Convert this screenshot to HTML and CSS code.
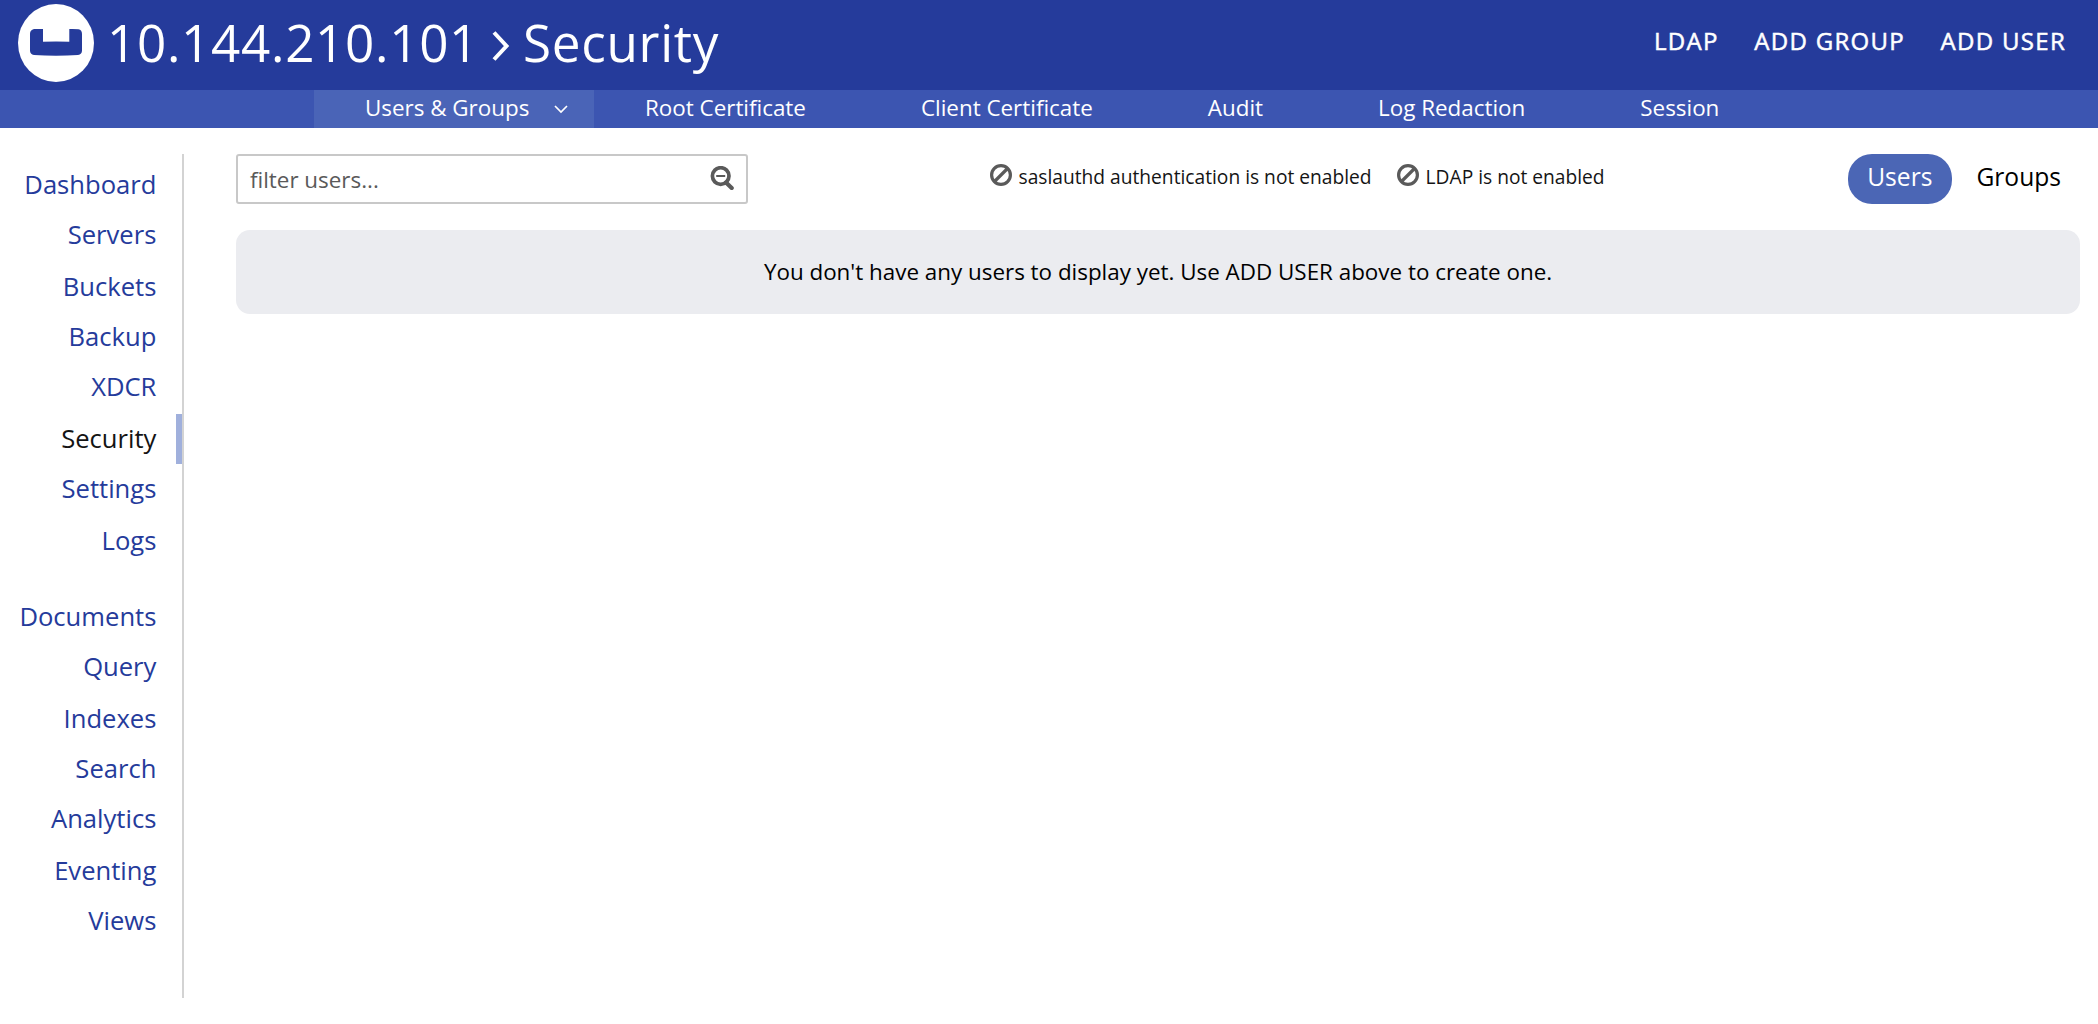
FILE: index.html
```html
<!DOCTYPE html>
<html lang="en">
<head>
<meta charset="utf-8">
<title>Security</title>
<link rel="stylesheet" href="styles.css">
</head>
<body>
<header class="header">
  <svg class="logo" width="76" height="78" viewBox="0 0 76 78" aria-hidden="true">
    <ellipse cx="38" cy="39" rx="38" ry="39" fill="#fff"/>
    <path fill="#253b9b" d="M16 25.1Q20 24.800 25 25V37.800Q38 37.200 51.300 37.800V25Q56 24.800 60.500 25.200Q64 26 64 30V46.500Q64 50.300 60 51Q38 52.600 16 51Q12 50.300 12 46.500V30Q12 26 16 25.100Z"/>
  </svg>
  <h1 class="title">
    <span>10.144.210.101</span>
    <svg class="crumb" width="18" height="30" viewBox="0 0 18 30" fill="none" stroke="#fff" stroke-width="4" aria-hidden="true"><path d="M2 1.500L14.500 15L2 28.500"/></svg>
    <span>Security</span>
  </h1>
  <div class="actions"><a>LDAP</a><a>ADD GROUP</a><a>ADD USER</a></div>
</header>
<nav class="subnav">
  <a class="tab active">Users &amp; Groups<svg class="chev" width="14" height="9" viewBox="0 0 14 9" fill="none" stroke="#fff" stroke-width="1.700" aria-hidden="true"><path d="M1 1L7 7L13 1"/></svg></a>
  <a class="tab">Root Certificate</a>
  <a class="tab">Client Certificate</a>
  <a class="tab">Audit</a>
  <a class="tab">Log Redaction</a>
  <a class="tab">Session</a>
</nav>
<div class="layout">
  <nav class="sidebar">
    <a>Dashboard</a><a class="tall">Servers</a><a>Buckets</a><a>Backup</a><a class="tall">XDCR</a><a class="current">Security</a><a class="tall">Settings</a><a>Logs</a>
    <a class="group">Documents</a><a class="tall">Query</a><a>Indexes</a><a>Search</a><a class="tall">Analytics</a><a>Eventing</a><a>Views</a>
  </nav>
  <main class="main">
    <div class="toolbar">
      <div class="filter">
        <span>filter users...</span>
        <svg width="24" height="24" viewBox="0 0 24 24" fill="none" stroke="#5a5a5a" aria-hidden="true"><circle cx="10.700" cy="10" r="8.300" stroke-width="3.700"/><path d="M6.200 10H15.200" stroke-width="2"/><path d="M16 16.500L21.700 22" stroke-width="4.200" stroke-linecap="round"/></svg>
      </div>
      <div class="status">
        <span><svg width="22" height="22" viewBox="0 0 22 22" fill="none" stroke="#5a5a5a" stroke-width="3.200" aria-hidden="true"><circle cx="11" cy="11" r="9.400"/><path d="M4.500 17.500L17.500 4.500"/></svg>saslauthd authentication is not enabled</span>
        <span><svg width="22" height="22" viewBox="0 0 22 22" fill="none" stroke="#5a5a5a" stroke-width="3.200" aria-hidden="true"><circle cx="11" cy="11" r="9.400"/><path d="M4.500 17.500L17.500 4.500"/></svg>LDAP is not enabled</span>
      </div>
      <div class="pills"><a class="on">Users</a><a>Groups</a></div>
    </div>
    <div class="empty">You don't have any users to display yet. Use ADD USER above to create one.</div>
  </main>
</div>
</body>
</html>
```
FILE: styles.css
```css
* { box-sizing: border-box; }
body {
  margin: 0;
  background: #fff;
  color: #141414;
  font-family: "Open Sans", sans-serif;
}
.header {
  display: flex;
  align-items: flex-start;
  height: 90px;
  padding: 0 32px 0 18px;
  background: #253b9b;
  color: #fff;
}
.logo { margin-top: 4px; flex: none; }
.title {
  display: flex;
  margin: 0 0 0 13px;
  font-size: 51.2px;
  font-weight: 400;
  line-height: 84px;
  letter-spacing: .7px;
}
.crumb { margin: 31px 13px 0; }
.actions {
  display: flex;
  gap: 35.5px;
  margin-left: auto;
  font-size: 24px;
  letter-spacing: 1.3px;
  line-height: 81px;
  -webkit-text-stroke: .5px #fff;
}
.subnav {
  display: flex;
  height: 38px;
  padding-left: 314px;
  background: #3c55b1;
  color: #fff;
}
.tab {
  display: flex;
  padding: 0 64px 2px 51px;
  font-size: 22.4px;
  line-height: 36px;
}
.tab.active { width: 280px; padding-right: 0; background: #4a64b7; }
.chev { margin: 15px 0 0 25px; }
.layout { display: flex; padding-top: 26px; }
.sidebar {
  display: flex;
  flex-direction: column;
  width: 184px;
  height: 844px;
  padding-top: 6px;
  border-right: 2px solid #d3d3d3;
}
.sidebar a {
  height: 50px;
  padding-right: 25.6px;
  color: #253b9b;
  font-size: 25.6px;
  line-height: 49px;
  text-align: right;
}
.sidebar .tall { height: 52px; }
.sidebar .group { margin-top: 26px; }
.sidebar .current {
  padding-right: 19.6px;
  border-right: 6px solid #a0b0dc;
  color: #141414;
}
.main { flex: 1; padding: 0 18px 0 52px; }
.toolbar { display: flex; height: 50px; }
.filter {
  display: flex;
  justify-content: space-between;
  width: 512px;
  padding: 0 12px;
  border: 2px solid #c8c8c8;
  border-radius: 3px;
  color: #5a5a5a;
  font-size: 22.4px;
  line-height: 48px;
}
.filter svg { margin-top: 10px; }
.status {
  display: flex;
  gap: 25.5px;
  margin-left: 242px;
  font-size: 19.2px;
  line-height: 46px;
}
.status span { display: flex; gap: 6.5px; }
.status svg { margin-top: 10px; }
.pills {
  display: flex;
  margin-left: auto;
  font-size: 24.6px;
  line-height: 46px;
  color: #000;
}
.pills a { padding: 0 19px 4px; border-radius: 24px; }
.pills a + a { margin-left: 5px; }
.pills .on { padding: 0 20px 4px 19px; background: #4b66b5; color: #fff; }
.empty {
  height: 84px;
  margin-top: 26px;
  border-radius: 14px;
  background: #ebecf0;
  color: #000;
  font-size: 22.4px;
  line-height: 84px;
  text-align: center;
}
```
